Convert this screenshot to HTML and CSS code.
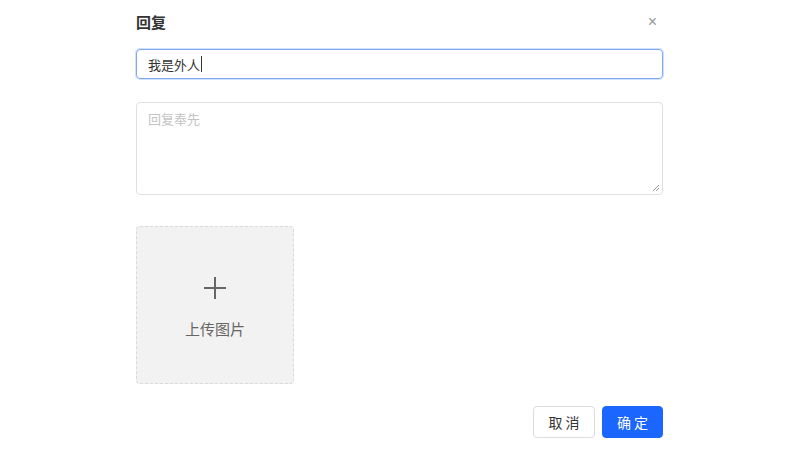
FILE: index.html
```html
<!DOCTYPE html>
<html lang="zh">
<head>
<meta charset="utf-8">
<link rel="stylesheet" href="styles.css">
</head>
<body>
<div class="dialog">
  <div class="header">
    <span class="title">回复</span>
    <span class="close">×</span>
  </div>
  <div class="input focused"><span class="value">我是外人</span><span class="caret"></span></div>
  <div class="textarea">
    <span class="placeholder">回复奉先</span>
    <svg class="grip" width="8" height="8" viewBox="0 0 8 8"><path d="M7 1L1 7M7 4L4 7" stroke="#999" stroke-width="1"/></svg>
  </div>
  <div class="upload">
    <svg class="plus" width="22" height="22" viewBox="0 0 22 22"><path d="M11 0V22M0 11H22" stroke="#666" stroke-width="2"/></svg>
    <span class="upload-label">上传图片</span>
  </div>
  <div class="footer">
    <button class="btn">取 消</button>
    <button class="btn primary">确 定</button>
  </div>
</div>
</body>
</html>
```
FILE: styles.css
```css
html, body {
  margin: 0;
  padding: 0;
  background: #fff;
  font-family: "Noto Sans CJK SC", "Liberation Sans", sans-serif;
}
.dialog {
  width: 527px;
  margin-left: 136px;
  padding-top: 9px;
  display: flex;
  flex-direction: column;
}
.header {
  display: flex;
  justify-content: space-between;
  align-items: center;
  height: 24px;
}
.title {
  font-size: 15px;
  font-weight: bold;
  color: #333;
}
.close {
  font-size: 16px;
  color: #999;
  margin-right: 6px;
  margin-top: 2px;
  font-family: "Liberation Sans", sans-serif;
}
.input {
  margin-top: 16px;
  height: 28px;
  border: 1px solid #dcdcdc;
  border-radius: 4px;
  display: flex;
  align-items: center;
  padding-left: 11px;
  font-size: 13px;
  color: #333;
}
.input.focused {
  border-color: #7ea8f5;
  box-shadow: 0 0 0 1px rgba(126,168,245,0.35);
}
.caret {
  width: 1px;
  height: 16px;
  background: #333;
  margin-left: 1px;
}
.textarea {
  margin-top: 23px;
  border: 1px solid #e0e0e0;
  border-radius: 4px;
  position: relative;
  padding: 6px 11px;
  box-sizing: border-box;
  height: 93px;
  font-size: 13px;
}
.placeholder {
  color: #c4c4c4;
}
.grip {
  position: absolute;
  right: 2px;
  bottom: 2px;
}
.upload {
  margin-top: 31px;
  width: 158px;
  height: 158px;
  box-sizing: border-box;
  border: 1px dashed #d9d9d9;
  border-radius: 4px;
  background: #f2f2f2;
  display: flex;
  flex-direction: column;
  align-items: center;
  padding-top: 50px;
}
.upload-label {
  margin-top: 19px;
  font-size: 15px;
  line-height: 22px;
  color: #666;
}
.footer {
  margin-top: 22px;
  display: flex;
  justify-content: flex-end;
  gap: 7px;
}
.btn {
  width: 62px;
  height: 32px;
  border: 1px solid #dcdcdc;
  border-radius: 4px;
  background: #fff;
  color: #333;
  font-size: 14px;
  font-family: "Noto Sans CJK SC", sans-serif;
  padding: 0;
}
.btn.primary {
  width: 61px;
  background: #1a66ff;
  border-color: #1a66ff;
  color: #fff;
}
```
